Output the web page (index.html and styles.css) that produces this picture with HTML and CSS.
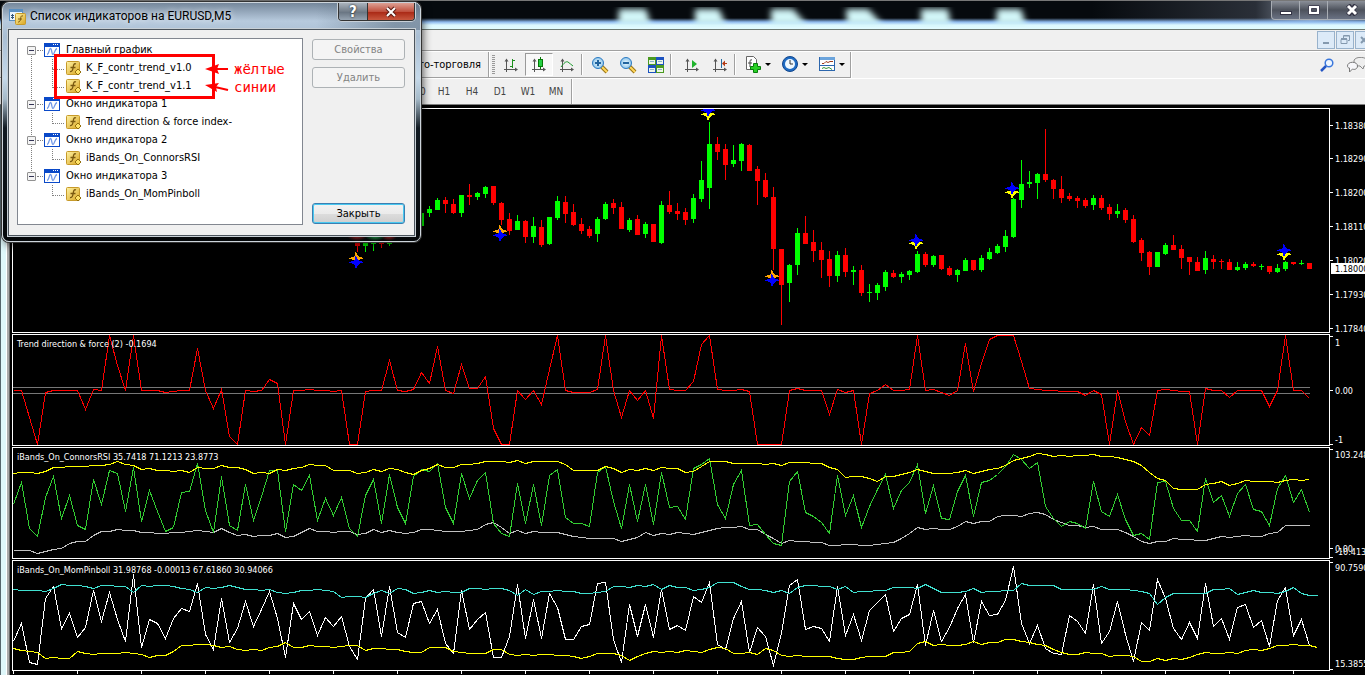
FILE: index.html
```html
<!DOCTYPE html>
<html lang="ru">
<head>
<meta charset="utf-8">
<title>Список индикаторов на EURUSD,M5</title>
<link rel="stylesheet" href="styles.css">
</head>
<body>
<svg class="defs" width="0" height="0" aria-hidden="true">
  <defs>
    <linearGradient id="gold" x1="0" y1="0" x2="1" y2="1"><stop offset="0" stop-color="#fff3a6"/><stop offset="1" stop-color="#d9a520"/></linearGradient>
    <radialGradient id="lens"><stop offset="0" stop-color="#f2fbff"/><stop offset="1" stop-color="#8cc4ea"/></radialGradient>
    <symbol id="i-window" viewBox="0 0 16 14">
      <rect x=".5" y=".5" width="15" height="13" fill="#fff" stroke="#0a49c8"/>
      <path d="M0 0h16v4H0z" fill="#0a49c8"/><path d="M9 1h1v1H9zM11 1h1v1h-1zM13 1h1v1h-1z" fill="#fff"/>
      <path d="M3 11.500C5 11.500 5 5.500 6.500 5.500S7.500 11.500 9 11.500 10.500 6 13 5.500" fill="none" stroke="#6f97e8" stroke-width="1.300"/>
    </symbol>
    <symbol id="i-func" viewBox="0 0 16 16">
      <rect x=".5" y="1.500" width="13" height="13" rx="1" fill="url(#gold)" stroke="#c79a2a"/>
      <path d="M10 4C8 3 7.500 5 7.200 7S6.500 12 4 11.500M4.500 7.500h5" fill="none" stroke="#7a5810" stroke-width="1.300"/>
      <path d="M12 9l3 3-3 3-3-3z" fill="#ffe268" stroke="#94700e"/>
    </symbol>
    <g id="axes"><path d="M3.500 3v12M1 12.500h13" stroke="#555" fill="none"/><path d="M1.500 4.500L3.500 1.500l2 3zM12 10.500l3 2-3 2z" fill="#555"/></g>
  </defs>
</svg>

<div class="app">
  <header class="titlebar">
    <svg class="glow" aria-hidden="true"><filter id="soft"><feGaussianBlur stdDeviation="3"/></filter>
      <g fill="#d2f6f8" filter="url(#soft)"><path d="M619 9h27l5 16h-33z"/><path d="M695 9h24l7 16h-31z"/><path d="M771 9h22l14 16h-36z"/><path d="M846 9h22l15 16h-36z"/><path d="M921 9h27l3 16h-30z"/><path d="M997 9h24l5 16h-30z"/></g>
    </svg>
    <div class="caption">
      <button aria-label="Свернуть"><svg width="14" height="12"><rect x="1.500" y="7.500" width="11" height="3" fill="#fff" stroke="#334"/></svg></button>
      <button aria-label="Развернуть"><svg width="14" height="12"><path d="M1.500 1.500h11v9h-11zM4.500 4.500v3h5v-3z" fill="#fff" fill-rule="evenodd" stroke="#445"/></svg></button>
      <button class="wide" aria-label="Закрыть окно"><svg width="14" height="12"><path d="M3 1l8 10M11 1L3 11" stroke="#334" stroke-width="5"/><path d="M3 2l8 8M11 2l-8 8" stroke="#fff" stroke-width="3"/></svg></button>
    </div>
  </header>
  <div class="menubar">
    <button aria-label="Свернуть график"><svg width="12" height="12"><path d="M3 9h6" stroke="#8499ae" stroke-width="2"/></svg></button>
    <button aria-label="Восстановить график"><svg width="12" height="12" fill="none" stroke="#8499ae"><path d="M4.500 4V1.500h6v5H9M2 5.500h6v4H2zM2 4.500h6M5 2h5"/></svg></button>
    <button aria-label="Закрыть график"><svg width="12" height="12"><path d="M3 3l6 6M9 3L3 9" stroke="#8499ae" stroke-width="2"/></svg></button>
  </div>
  <div class="toolrow">
    <div class="bar first"><button class="text">Авто-торговля</button></div>
    <div class="bar">
      <span class="grip"></span>
      <button class="tool" aria-label="Бары"><svg width="16" height="16"><use href="#axes"/><path d="M9.500 2v9M7 9.500h2M10 3.500h2" stroke="#1c8f1c" fill="none"/></svg></button>
      <button class="tool on" aria-label="Свечи"><svg width="16" height="16"><use href="#axes"/><path d="M9.500 0v12" stroke="#087808"/><rect x="7.500" y="2.500" width="4" height="7" fill="#25d043" stroke="#087808"/></svg></button>
      <button class="tool" aria-label="Линия"><svg width="16" height="16"><use href="#axes"/><path d="M2 10C5 6 7 4 9 5s3 3 5 4" stroke="#1c9a2c" fill="none"/></svg></button>
      <span class="sep"></span>
      <button class="tool" aria-label="Приблизить"><svg width="18" height="18"><path d="M10 10l6 6" stroke="#9a7416" stroke-width="4"/><path d="M11 11l5 5" stroke="#ffd75c" stroke-width="2"/><circle cx="7" cy="7" r="5.500" fill="url(#lens)" stroke="#2b7ac2"/><path d="M4 7h6M7 4v6" stroke="#22649e" stroke-width="2"/></svg></button>
      <button class="tool" aria-label="Отдалить"><svg width="18" height="18"><path d="M10 10l6 6" stroke="#9a7416" stroke-width="4"/><path d="M11 11l5 5" stroke="#ffd75c" stroke-width="2"/><circle cx="7" cy="7" r="5.500" fill="url(#lens)" stroke="#2b7ac2"/><path d="M4 7h6" stroke="#22649e" stroke-width="2"/></svg></button>
      <button class="tool" aria-label="Плитка"><svg width="16" height="16"><path d="M0 0h8v8H0zM8 8h8v8H8z" fill="#4a9a20"/><path d="M8 0h8v8H8zM0 8h8v8H0z" fill="#1c52c0"/><path d="M1 3h6v4H1zM9 3h6v4H9zM1 11h6v4H1zM9 11h6v4H9z" fill="#eef6e8"/><path d="M2 4.500h4M10 4.500h4M2 12.500h4M10 12.500h4" stroke="#8cb4c8"/></svg></button>
      <span class="sep wide"></span>
      <button class="tool" aria-label="Автопрокрутка"><svg width="16" height="16"><use href="#axes"/><path d="M8 3l5 4-5 4z" fill="#1fb32c"/></svg></button>
      <button class="tool" aria-label="Сдвиг"><svg width="16" height="16"><use href="#axes"/><path d="M9.500 2v9" stroke="#246aa0"/><path d="M15 6.500h-4" stroke="#b33a14"/><path d="M10 6.500l3-3v6z" fill="#b33a14"/></svg></button>
      <span class="sep"></span>
      <button class="drop" aria-label="Индикаторы"><svg width="17" height="17"><path d="M1.500.500h7l3 3v10h-10z" fill="#fff" stroke="#666"/><path d="M7 4C5 3 5 5 5 6v5M3 7h4" stroke="#444" fill="none"/><path d="M8.500 10.500V7.500h4v3h3v3h-3v3h-4v-3h-3v-3z" fill="#28d024" stroke="#087d0c"/></svg><i></i></button>
      <button class="drop" aria-label="Периоды"><svg width="17" height="17"><circle cx="8" cy="8" r="7.500" fill="#1f6cc4" stroke="#12468c"/><circle cx="8" cy="8" r="5" fill="#eef8ff"/><path d="M8 4v4h3" stroke="#333" fill="none"/></svg><i></i></button>
      <button class="drop" aria-label="Шаблоны"><svg width="17" height="17"><rect x=".5" y="1.500" width="15" height="13" fill="#fff" stroke="#2c66ad"/><path d="M1 1h15v3H1z" fill="#6ba4dc"/><path d="M1 9.500h14" stroke="#2c66ad"/><path d="M3 7.500h2l2-2 2 1 2-1h3" stroke="#9c3b1c" fill="none"/><path d="M3 12.500l2-1 2 1 3-1 3 2" stroke="#369338" fill="none"/></svg><i></i></button>
    </div>
    <div class="status">
      <button aria-label="Поиск"><svg width="14" height="14"><circle cx="9" cy="5" r="3.800" fill="#eef6ff" stroke="#3a77dc" stroke-width="1.500"/><path d="M6 8l-5 5" stroke="#2456c4" stroke-width="2.500"/></svg></button>
      <button aria-label="Сообщения"><svg width="22" height="16"><path d="M7 4c0-5 14-5 14 1 0 3-2 4-4 4l-1 3-3-3C9 9 7 7 7 4z" fill="#eee" stroke="#888"/><path d="M.5 9c0-5 10-5 10 0 0 3-3 4-5 3l-3 3v-4C1 11 .5 10 .5 9z" fill="#f7f7fa" stroke="#777"/></svg></button>
    </div>
  </div>
  <div class="toolrow frames">
    <div class="bar periods">
      <button>M30</button><button>H1</button><button>H4</button><button>D1</button><button>W1</button><button>MN</button>
    </div>
  </div>
  <main class="workspace">
    <div class="edge"></div>
    <div class="charts">
      <section class="panel price"><svg class="plot" id="price"></svg><svg class="axis" id="price-axis"></svg></section>
      <section class="panel"><svg class="plot" id="trend"></svg><svg class="axis" id="trend-axis"></svg></section>
      <section class="panel"><svg class="plot" id="rsi"></svg><svg class="axis" id="rsi-axis"></svg></section>
      <section class="panel last"><svg class="plot" id="mom"></svg><svg class="axis" id="mom-axis"></svg></section>
      <svg class="timeline" id="time"></svg>
    </div>
  </main>
</div>

<div class="dialog" role="dialog" aria-labelledby="dlg-title">
  <div class="dlg-head">
    <svg width="17" height="17" aria-hidden="true"><rect x=".5" y="1.500" width="13" height="11" fill="#e8f4fc" stroke="#5a8fc0"/><path d="M1 2h13v2H1z" fill="#5a8fc0"/><path d="M3.500 6v5M2 7.500h3M2 9.500h3" stroke="#357"/><rect x="6.500" y="5.500" width="10" height="11" rx="1" fill="url(#gold)" stroke="#c79a2a"/><path d="M14 8c-3-1-2 3-3 5-1 1-1 1-2 1M9 11h4" fill="none" stroke="#7a5810"/></svg>
    <h1 id="dlg-title">Список индикаторов на EURUSD,M5</h1>
    <div class="dlg-caption">
      <button aria-label="Справка">?</button>
      <button class="x" aria-label="Закрыть диалог"><svg width="14" height="12"><path d="M3 2l8 8M11 2l-8 8" stroke="#5b1c14" stroke-width="4"/><path d="M3 2l8 8M11 2l-8 8" stroke="#fff" stroke-width="2"/></svg></button>
    </div>
  </div>
  <div class="dlg-body">
    <ul class="tree">
      <li><div class="node"><button aria-label="Свернуть ветвь"></button><svg width="16" height="14"><use href="#i-window"/></svg>Главный график</div>
        <ul><li><svg width="16" height="16"><use href="#i-func"/></svg>K_F_contr_trend_v1.0</li><li><svg width="16" height="16"><use href="#i-func"/></svg>K_F_contr_trend_v1.1</li></ul></li>
      <li><div class="node"><button aria-label="Свернуть ветвь"></button><svg width="16" height="14"><use href="#i-window"/></svg>Окно индикатора 1</div>
        <ul><li><svg width="16" height="16"><use href="#i-func"/></svg>Trend direction &amp; force index-</li></ul></li>
      <li><div class="node"><button aria-label="Свернуть ветвь"></button><svg width="16" height="14"><use href="#i-window"/></svg>Окно индикатора 2</div>
        <ul><li><svg width="16" height="16"><use href="#i-func"/></svg>iBands_On_ConnorsRSI</li></ul></li>
      <li><div class="node"><button aria-label="Свернуть ветвь"></button><svg width="16" height="14"><use href="#i-window"/></svg>Окно индикатора 3</div>
        <ul><li><svg width="16" height="16"><use href="#i-func"/></svg>iBands_On_MomPinboll</li></ul></li>
    </ul>
    <div class="actions">
      <button disabled>Свойства</button>
      <button disabled>Удалить</button>
      <button class="default">Закрыть</button>
    </div>
  </div>
  <div class="mark"></div>
  <div class="notes">
    <p><svg width="24" height="12"><path d="M23 6H10" stroke="red" stroke-width="2"/><path d="M0 6l14-5-2 5 2 5z" fill="red"/></svg>жёлтые</p>
    <p><svg width="24" height="12"><path d="M23 9L10 6" stroke="red" stroke-width="2"/><path d="M0 4l14-2-3 4 1 5z" fill="red"/></svg>синии</p>
  </div>
</div>
<script src="charts.js"></script>
</body>
</html>
```

FILE: styles.css
```css
* { box-sizing: border-box; }
body {
  margin: 0;
  overflow: hidden;
  background: #000;
  font: 11px/14px "DejaVu Sans Condensed", "Noto Sans", sans-serif;
  color: #000;
}
button { font: inherit; color: inherit; margin: 0; padding: 0; border: 0; background: none; }
svg { display: block; flex: none; }
.defs { position: absolute; }

.app { display: flex; flex-direction: column; height: 100vh; }

.titlebar {
  position: relative;
  display: flex;
  justify-content: flex-end;
  height: 30px;
  overflow: hidden;
  border-top: 1px solid #777;
  border-bottom: 1px solid #6e7a74;
  background:
    linear-gradient(transparent 17px, #8db9ee 21px, #dcf8ff 24px, #e2fcff),
    linear-gradient(90deg, #060a0e 80%, #2a2f38 92%, #8a94a4 96%, #20242c);
}
.glow { position: absolute; left: 0; top: -1px; width: 100%; height: 29px; }
.caption { position: relative; display: flex; height: 19px; margin-right: -12px; border: 1px solid #a8adb4; border-top: 0; border-radius: 0 0 0 4px; background: linear-gradient(#8a8f98, #4d525c 50%, #6a7284); }
.caption button { display: grid; place-items: center; width: 28px; border-right: 1px solid #a8adb4; }
.caption .wide { width: 48px; }

.menubar {
  display: flex;
  justify-content: flex-end;
  gap: 1px;
  height: 21px;
  overflow: hidden;
  padding-top: 1px;
  border-bottom: 1px solid #a0a0a0;
  background: #f0f0f0;
}
.menubar button { display: grid; place-items: center; flex: none; width: 18px; height: 18px; border: 1px solid #98b2cc; background: #dceaf8; }
.menubar button:last-child { margin-right: -8px; }

.toolrow { display: flex; height: 27px; overflow: hidden; border-top: 1px solid #fff; background: #f0f0f0; }
.frames { border-bottom: 1px solid #808080; }
.bar { display: flex; align-items: center; border-right: 1px solid #a0a0a0; border-bottom: 1px solid #a0a0a0; box-shadow: 1px 0 #fff; }
.bar.first { width: 489px; justify-content: flex-end; padding-right: 7px; }
.grip { width: 3px; height: 20px; margin: 0 2px 0 3px; background: repeating-linear-gradient(#999 0 1px, #f0f0f0 1px 2px); }
.tool { display: grid; place-items: center; width: 28px; height: 23px; }
.tool.on { border: 1px solid #999; border-right-color: #fff; border-bottom-color: #fff; background: #f8f8f8; }
.sep { width: 5px; height: 21px; border-left: 1px solid #a0a0a0; background: linear-gradient(#fff, #fff) 0 0 / 1px 100% no-repeat; }
.sep.wide { width: 8px; }
.drop { display: flex; align-items: center; gap: 3px; width: 37px; padding-left: 6px; }
.drop i { border: 3px solid transparent; border-top-color: #000; border-bottom: 0; }
.status { display: flex; gap: 13px; align-items: center; margin: 0 -4px 0 auto; }
.periods { width: 572px; justify-content: flex-end; padding-right: 1px; border-bottom: 0; color: #444; font-size: 10px; }
.periods button { width: 28px; }

.workspace { display: flex; flex: 1; min-height: 0; background: #000; padding-top: 3px; }
.edge { width: 10px; margin-right: 2px; margin-top: -3px; border-left: 1px solid #56666c; border-right: 1px solid #696969; background: linear-gradient(90deg, #dff7fa 5px, #fff 5px 6px, #aaa 6px); }
.charts { display: grid; flex: 1; grid-template-rows: 225fr 112fr 112fr 111fr 4px; row-gap: 1px; min-width: 0; margin-bottom: -1px; }
.panel { display: flex; min-height: 0; }
.plot { flex: 1; min-width: 0; height: 100%; border: 1px solid #fff; shape-rendering: crispEdges; }
.axis { width: 35px; height: 100%; overflow: visible; }
.timeline { width: 100%; height: 4px; margin-top: -1px; }
.charts text { fill: #fff; font-size: 9px; }
.charts .current { fill: #000; }

.dialog {
  position: absolute;
  left: 2px;
  top: 2px;
  width: 419px;
  padding: 0 5px 5px;
  border: 1px solid #cdd5dc;
  border-radius: 7px;
  background:
    radial-gradient(closest-side, #8a1c1c, transparent) 344px 100% / 20px 10px no-repeat,
    radial-gradient(closest-side, #1c8a3c, transparent) 362px 100% / 20px 10px no-repeat,
    radial-gradient(closest-side, #8a1c1c, transparent) 378px 100% / 16px 10px no-repeat,
    linear-gradient(90deg, transparent 75%, #56697c88 94%) 0 0 / 100% 27px no-repeat,
    linear-gradient(#75879b 0, #b7cadd 18px, #a9bed3 34px, #c5d9ea 75px, #a5bac9 96px, #111a22 125px, #05080a);
  box-shadow: 0 0 0 1px #333, 2px 3px 9px #000a;
}
.dlg-head { display: flex; align-items: center; height: 26px; padding-left: 1px; }
.dlg-head h1 { flex: 1; margin: 0 0 0 4px; font: 12px/16px Roboto, "Noto Sans", sans-serif; text-shadow: 0 0 6px #fff; white-space: nowrap; }
.dlg-caption { display: flex; align-self: flex-start; height: 18px; border: 1px solid #333; border-top: 0; border-radius: 0 0 4px 4px; overflow: hidden; box-shadow: 0 0 0 1px #c8d0d8; }
.dlg-caption button { display: grid; place-items: center; width: 28px; background: linear-gradient(#a9b2bc, #727d89 50%, #66727f 51%, #96a4b2); color: #fff; font-size: 15px; font-weight: bold; text-shadow: 0 0 2px #000; }
.dlg-caption .x { width: 47px; border-left: 1px solid #333; background: linear-gradient(#dda094, #c0513f 50%, #a82613 51%, #c8583f); }
.dlg-body { display: flex; gap: 9px; padding: 8px 9px 10px 8px; border: 1px solid #4c555d; outline: 1px solid #c8d0d6; background: #f0f0f0; }
.tree, .tree ul { margin: 0; padding: 0; list-style: none; }
.tree { flex: 1; height: 187px; padding: 2px 0 0 9px; border: 1px solid #828790; background: #fff; white-space: nowrap; }
.tree > li { position: relative; }
.tree > li:not(:last-child)::after { content: ""; position: absolute; left: 4px; top: 15px; bottom: -6px; border-left: 1px dotted #808080; }
.node { display: flex; align-items: center; height: 18px; gap: 6px; }
.node button { position: relative; width: 9px; height: 9px; margin-right: 2px; border: 1px solid #919191; border-radius: 1px; background: linear-gradient(#335, #335) center / 5px 1px no-repeat, #f4f4f4; }
.node button::after { content: ""; position: absolute; left: 9px; top: 3px; width: 6px; border-top: 1px dotted #808080; }
.tree ul li { position: relative; display: flex; align-items: center; height: 18px; gap: 4px; padding-left: 39px; }
.tree ul li::before { content: ""; position: absolute; left: 25px; top: 0; width: 11px; height: 10px; border: 1px dotted #808080; border-width: 0 0 1px 1px; }
.tree ul li + li::before { top: -9px; height: 19px; }
.actions { display: flex; flex-direction: column; gap: 7px; width: 93px; padding: 1px 0; }
.actions button { height: 21px; border: 1px solid #707070; border-radius: 3px; background: linear-gradient(#f2f2f2, #ebebeb 50%, #ddd 51%, #cfcfcf); }
.actions button:disabled { color: #838383; border-color: #adb2b5; background: #f4f4f4; }
.actions .default { margin-top: auto; border-color: #3c7fb1; box-shadow: inset 0 0 0 1px #48c8f0; }
.mark { position: absolute; left: 51px; top: 51px; width: 161px; height: 45px; border: 3px solid #f00; }
.notes { position: absolute; left: 202px; top: 57px; color: #f00; font: 14px/18px "DejaVu Sans Mono", monospace; }
.notes p { display: flex; align-items: center; gap: 5px; margin: 0; }
```

FILE: charts.js
```js
// Bars are 8px apart. Vertical values are stored in thirds of a pixel.
const STEP = 8, UNIT = 3;
const NS = 'http://www.w3.org/2000/svg';
const $ = id => document.getElementById(id);
function add(parent, tag, attrs, text) {
  const el = document.createElementNS(NS, tag);
  for (const k in attrs) el.setAttribute(k, attrs[k]);
  if (text !== undefined) el.textContent = text;
  parent.appendChild(el);
  return el;
}
// Each group separated by "|" holds eight consecutive bars.
function line(id, color, origin, data) {
  const pts = [];
  data.trim().split('|').forEach((row, r) => row.trim().split(/\s+/).forEach((v, i) => {
    pts.push(((r * 8 + i) * STEP + 0.5) + ',' + (Math.floor((v - origin) / UNIT) + 0.5));
  }));
  add($(id), 'polyline', { points: pts.join(' '), fill: 'none', stroke: color });
}

// Candles: direction, high, body top, body bottom, low.
const candles = {
43: 'r 390 400 423 441|g 390 400 423 441|g 400 414 417 438|r 400 414 417 429|g 400 414 417 423',
51: 'g 324 324 363 363|g 303 312 324 336|g 279 285 315 315|r 276 285 297 324|r 282 297 324 327|g 270 270 324 336|r 237 270 276 300|g 261 264 276 285|g 243 246 267 279|r 243 243 294 300',
61: 'r 291 294 345 360|r 324 342 378 390|g 330 348 375 375|r 345 348 396 414|g 336 363 396 414|r 345 366 420 426|g 336 336 417 420|g 273 288 339 345|r 273 291 327 354|r 297 321 360 363',
71: 'r 339 357 378 387|r 363 372 393 399|g 336 342 387 411|g 291 297 342 345|r 282 294 309 327|r 291 306 372 372|g 339 345 375 381|r 330 342 390 390|g 351 357 387 399|r 357 357 411 411',
81: 'g 288 300 414 417|r 258 300 321 327|r 294 318 327 345|r 309 321 345 360|g 267 279 342 354|g 168 225 282 291|g 51 117 249 312|r 96 117 141 165|r 117 132 180 225|g 120 165 177 186',
91: 'g 114 117 168 198|r 117 120 198 198|r 183 192 228 300|r 204 225 276 279|r 246 276 432 495|r 432 432 540 660|g 477 480 534 591|g 369 384 480 510|r 333 384 417 417|r 375 411 438 471',
101: 'r 411 435 465 519|r 438 462 513 546|g 438 450 513 531|r 429 450 501 516|g 483 495 501 540|r 480 495 564 573|g 537 561 564 591|g 534 540 564 585|g 495 501 546 558|r 495 504 516 519',
111: 'g 501 507 516 534|g 495 498 510 525|g 438 447 501 504|r 441 447 480 486|g 450 453 480 486|r 450 450 492 495|r 483 489 510 513|g 492 495 510 531|g 459 465 498 498|r 465 465 495 498',
121: 'g 450 459 495 501|g 429 441 462 465|g 417 423 444 447|g 375 393 426 441|g 279 282 396 399|g 165 237 285 309|g 198 231 237 249|g 204 207 234 282|r 72 207 225 231|r 222 225 252 282',
131: 'r 213 252 279 294|r 264 273 282 288|r 273 279 288 309|r 279 285 303 309|g 270 279 300 315|r 270 279 309 315|r 297 306 327 345|g 297 318 327 339|r 309 315 345 354|r 330 342 411 414',
141: 'r 399 405 444 468|r 438 441 486 510|g 441 441 486 486|g 414 420 447 450|r 390 420 435 435|r 420 432 459 492|r 456 456 471 510|r 456 471 498 498|g 438 459 495 507|r 450 462 471 492',
151: 'r 462 468 471 492|r 462 471 495 495|g 471 486 495 498|g 471 477 489 495|r 471 477 483 486|g 477 483 486 495|r 483 483 501 507|g 477 489 501 504|g 468 471 492 498|r 471 471 477 480',
161: 'g 465 474 477 480|r 474 474 492 492'
};
for (const start in candles) {
  candles[start].split('|').forEach((c, i) => {
    const [dir, ...raw] = c.split(' ');
    const [hi, top, bottom, low] = raw.map(v => Math.round((v - 12) / UNIT));
    const x = (Number(start) + i) * STEP, fill = dir === 'r' ? '#f00' : '#0f0';
    add($('price'), 'rect', { x, y: hi, width: 1, height: low - hi, fill });
    add($('price'), 'rect', { x: x - 2, y: top, width: 5, height: bottom - top, fill });
  });
}
// Signals: bar, y of the warm star, its colour, y of the blue star.
[[43, 149, '#ffa500', 153], [61, 122, '#ffa500', 126], [87, 5, '#ff0', 1], [95, 167, '#ffa500', 171],
 [113, 134, '#ff0', 131], [125, 83, '#ff0', 79], [159, 145, '#ff0', 141]].forEach(([k, y1, color, y2]) => {
  [[y1, color], [y2, '#00f']].forEach(([y, fill]) =>
    add($('price'), 'path', { fill, transform: `translate(${k * STEP - 1} ${y})`, d: 'M-8 0L-3-1-1-3 0-8 1-3 3-1 8 0 3 2 1 4 0 8-1 4-3 2z' }));
});

[52, 58].forEach(y => add($('trend'), 'path', { d: `M0 ${y}.5H1297`, stroke: '#777' }));
line('trend', '#f00', 15, `181 181 262 343 187 181 181 181|181 238 178 181 16 105 181 16|181 181 181 187 184 181 181 55|181 235 178 319 343 181 184 181|
148 159 343 181 181 178 181 181|184 181 343 343 184 181 181 91|181 184 178 127 160 49 181 189|103 175 175 139 295 343 343 181|
208 181 223 118 16 181 187 187|187 178 16 181 262 181 211 181|265 16 178 181 181 154 43 16|178 181 181 178 184 343 343 343|
343 181 175 181 181 181 253 178|187 181 343 190 181 163 181 181|178 16 181 178 187 196 181 40|184 100 27 16 16 16 93 175|
178 181 181 184 184 184 196 181|193 343 181 274 343 292 316 181|178 181 184 184 343 175 181 181|202 181 181 181 181 229 181 16|181 181 205`);

line('rsi', '#c0c0c0', 9, `316 316 316 325 319 313 310 294|289 289 271 259 259 253 257 256|261 262 265 265 262 262 259 256|259 261 250 262 271 268 274 271|
270 265 277 273 262 250 259 259|262 259 259 268 265 253 262 256|262 265 262 253 253 256 259 259|259 256 253 239 232 247 265 256|
265 259 262 262 262 268 274 277|280 280 280 280 289 283 277 262|271 265 268 262 265 268 262 256|250 247 247 244 253 253 268 280|
295 286 289 289 292 292 301 301|298 298 301 301 298 295 292 280|265 247 253 250 253 253 244 229|235 229 229 214 211 211 214 205|
202 208 223 232 241 241 247 243|253 253 253 262 274 289 295 289|289 280 283 283 286 286 280 274|277 274 271 274 274 265 262 241|241 241 241`);
line('rsi', '#32cd32', 9, `178 112 250 274 157 94 220 151|240 253 103 178 76 85 199 67|229 136 199 259 247 142 139 55|196 262 94 241 256 118 226 154|
76 75 259 118 136 91 226 160|211 157 250 274 151 103 235 88|187 235 94 73 79 55 187 235|85 160 106 82 235 265 274 115|
235 118 241 91 73 217 235 235|244 82 64 169 250 118 229 118|238 82 187 184 223 70 58 40|178 220 118 76 241 238 268 295|
301 109 79 202 214 232 265 91|211 151 247 184 133 88 190 136|112 58 205 121 220 223 139 91|214 112 106 88 64 28 43 70|
52 184 220 244 229 235 250 109|199 214 148 223 271 265 283 112|109 190 226 226 259 100 172 151|214 145 118 193 199 241 130 91|172 133 203`);
line('rsi', '#ff0', 9, `85 82 82 86 79 68 67 65|64 64 61 61 58 50 58 61|73 70 75 76 79 76 82 67|70 70 61 67 67 73 85 83|
85 73 76 71 67 58 61 61|75 76 76 85 82 73 79 70|73 82 88 76 70 58 67 67|58 58 54 49 49 49 52 46|
55 49 49 49 49 58 76 76|76 76 64 70 81 73 76 70|75 67 70 70 81 79 64 49|49 49 55 55 55 55 58 55|
61 52 52 52 55 55 67 73|97 94 94 100 108 94 94 88|83 73 79 85 85 85 82 76|85 79 73 70 60 46 40 34|
25 28 34 31 34 31 31 28|33 34 37 43 49 61 82 99|106 130 132 132 132 118 115 109|121 115 106 108 109 109 112 106|103 106 103`);

line('mom', '#fff', 348, `589 535 652 658 460 424 550 505|577 547 436 529 442 523 589 388|607 523 535 580 520 490 499 415|568 613 460 592 550 469 544 493|
439 520 637 475 523 499 571 517|544 514 604 643 460 433 574 424|562 577 475 469 535 493 595 625|436 553 523 502 637 637 574 418|
580 463 580 445 487 583 583 544|538 415 412 583 652 478 574 478|577 433 553 541 555 454 472 412|598 613 520 469 622 547 574 661|
565 421 403 553 544 550 589 424|571 508 586 496 472 448 559 520|508 418 601 496 589 547 490 448|592 469 511 508 466 364 535 595|
541 610 625 628 511 529 565 418|595 559 469 568 649 532 556 403|460 550 583 532 580 415 544 520|583 487 478 547 526 604 466 427|571 523 600`);
line('mom', '#40e0d0', 348, `433 436 436 436 439 430 418 421|421 424 430 421 421 424 424 441|421 424 421 421 424 430 433 442|427 430 427 421 427 433 433 436|
433 443 445 442 436 436 433 436|440 457 454 454 457 445 436 445|430 433 445 442 436 441 439 442|442 430 430 433 430 430 436 450|
433 448 439 439 436 439 439 445|445 442 439 424 424 427 421 424|418 432 421 427 427 436 433 427|412 412 412 424 433 433 436 442|
436 444 427 421 421 424 424 433|424 442 439 439 436 436 427 427|427 430 418 430 442 442 442 439|430 441 439 439 436 436 415 421|
421 421 421 433 433 433 433 433|424 433 433 433 436 439 445 478|457 445 445 445 445 445 433 433|430 448 442 436 442 442 445 439|427 445 451 451`);
line('mom', '#ff0', 348, `611 615 619 621 640 637 640 640|619 625 628 625 625 625 622 625|628 637 632 631 619 602 601 598|598 601 607 604 613 616 613 616|
607 604 592 607 607 601 604 604|607 604 601 601 616 610 610 613|613 619 622 622 607 607 607 619|622 625 625 625 613 613 628 631|
628 631 628 628 631 631 634 640|634 625 625 625 631 646 634 625|619 622 619 622 616 619 622 613|607 610 625 625 622 628 610 616|
631 634 631 634 634 634 634 640|643 643 637 634 634 634 622 622|619 595 589 601 598 601 601 598|589 598 592 592 583 583 589 592|
598 601 613 622 628 628 622 625|625 634 631 631 634 649 649 640|646 640 643 637 628 622 625 625|622 625 616 613 616 610 601 601|598 601 601 607`);

add($('trend'), 'text', { x: 4, y: 12 }, 'Trend direction & force (2) -0.1694');
add($('rsi'), 'text', { x: 4, y: 12 }, 'iBands_On_ConnorsRSI 35.7418 71.1213 23.8773');
add($('mom'), 'text', { x: 4, y: 12 }, 'iBands_On_MomPinboll 31.98768 -0.00013 67.61860 30.94066');

function label(id, y, text, tick = y) {
  add($(id), 'path', { d: `M0 ${tick}.5h3`, stroke: '#fff' });
  add($(id), 'text', { x: 5, y: y + 4 }, text);
}
[[17, '1.18380'], [50, '1.18290'], [84, '1.18200'], [118, '1.18110'], [152, '1.18020'], [186, '1.17930'], [220, '1.17840']].forEach(([y, t]) => label('price-axis', y, t));
add($('price-axis'), 'rect', { x: 1, y: 155, width: 36, height: 11, fill: '#fff' });
add($('price-axis'), 'text', { x: 5, y: 164, class: 'current' }, '1.18000');
label('trend-axis', 8, '1', 2);
label('trend-axis', 56, '0.00');
label('trend-axis', 105, '-1', 110);
label('rsi-axis', 7, '103.2481', 2);
label('rsi-axis', 101, '0.00');
label('rsi-axis', 104, '-10.4134', 110);
label('mom-axis', 7, '90.7590', 2);
label('mom-axis', 103, '15.3855', 109);
for (let x = 1; x < 1316; x += 64) add($('time'), 'path', { d: `M${x}.5 0v3`, stroke: '#fff' });
```
